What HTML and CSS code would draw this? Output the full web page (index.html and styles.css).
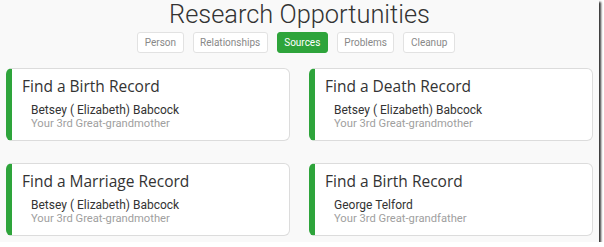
FILE: index.html
```html
<!DOCTYPE html>
<html lang="en">
<head>
    <meta charset="UTF-8">
    <meta name="viewport" content="width=device-width, initial-scale=1.0">
    <title>Research Opportunities</title>
    <link rel="stylesheet" href="styles.css">
</head>
<body>
    <div class="frame">
        <h1 class="page-title">Research Opportunities</h1>
        <nav class="tabs">
            <button class="tab">Person</button>
            <button class="tab">Relationships</button>
            <button class="tab active">Sources</button>
            <button class="tab">Problems</button>
            <button class="tab">Cleanup</button>
        </nav>
        <div class="cards">
            <div class="card">
                <h2 class="card-title">Find a Birth Record</h2>
                <div class="person">Betsey ( Elizabeth) Babcock</div>
                <div class="relation">Your 3rd Great-grandmother</div>
            </div>
            <div class="card">
                <h2 class="card-title">Find a Death Record</h2>
                <div class="person">Betsey ( Elizabeth) Babcock</div>
                <div class="relation">Your 3rd Great-grandmother</div>
            </div>
            <div class="card">
                <h2 class="card-title">Find a Marriage Record</h2>
                <div class="person">Betsey ( Elizabeth) Babcock</div>
                <div class="relation">Your 3rd Great-grandmother</div>
            </div>
            <div class="card">
                <h2 class="card-title">Find a Birth Record</h2>
                <div class="person">George Telford</div>
                <div class="relation">Your 3rd Great-grandfather</div>
            </div>
        </div>
    </div>
</body>
</html>
```

FILE: styles.css
```css
body {
    margin: 0;
    background: #ffffff;
    font-family: 'Open Sans', 'Liberation Sans', sans-serif;
    color: #333;
}
.frame {
    width: 599px;
    height: 242px;
    background: #f9f9f9;
    box-shadow: 2px 2px 2px rgba(0, 0, 0, 0.8);
    overflow: hidden;
}
.page-title {
    margin: 0;
    font-family: 'Roboto', sans-serif;
    font-weight: 300;
    font-size: 25.4px;
    line-height: 29px;
    text-align: center;
    color: #333;
}
.tabs {
    display: flex;
    justify-content: center;
    gap: 9px;
    margin-top: 3px;
    padding-right: 7px;
}
.tab {
    height: 21px;
    padding: 0 6.5px;
    font-family: 'Roboto', sans-serif;
    font-size: 10px;
    color: #888;
    background: #fff;
    border: 1px solid #e2e2e2;
    border-radius: 3px;
}
.tab.active {
    background: #2ea43b;
    border-color: #2ea43b;
    color: #fff;
}
.cards {
    display: grid;
    grid-template-columns: 284px 284px;
    column-gap: 19px;
    row-gap: 22px;
    padding: 0 6px;
    margin-top: 15px;
}
.card {
    height: 73px;
    box-sizing: border-box;
    padding: 6px 10px 0 10px;
    background: #fff;
    border: 1px solid #dcdcdc;
    border-left: 6px solid #2ea43b;
    border-radius: 6px;
}
.card-title {
    margin: 0 0 6px 0;
    font-weight: 400;
    font-size: 15.5px;
    line-height: 22px;
    color: #333;
}
.person {
    padding-left: 9px;
    font-family: 'Roboto', sans-serif;
    font-size: 12px;
    line-height: 14px;
    color: #333;
}
.relation {
    padding-left: 9px;
    font-family: 'Roboto', sans-serif;
    font-size: 11.2px;
    line-height: 14px;
    color: #a0a0a0;
}
```
